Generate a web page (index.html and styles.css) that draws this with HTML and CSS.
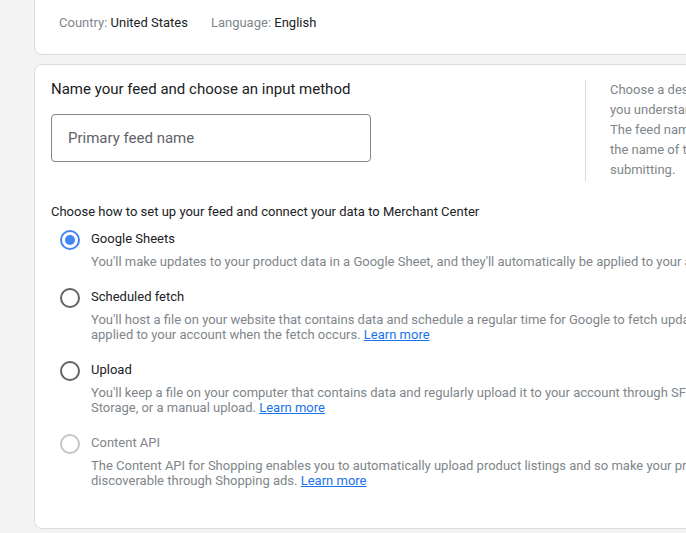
FILE: index.html
```html
<!DOCTYPE html>
<html lang="en">
<head>
<meta charset="utf-8">
<title>Feed setup</title>
<link rel="stylesheet" href="styles.css">
</head>
<body>
<main class="page">
  <section class="card card-summary">
    <div class="meta">
      <span class="meta-item"><span class="meta-key">Country:</span> United States</span>
      <span class="meta-item"><span class="meta-key">Language:</span> English</span>
    </div>
  </section>

  <section class="card card-feed">
    <div class="name-row">
      <div class="name-main">
        <h2 class="title">Name your feed and choose an input method</h2>
        <div class="input-box"><span class="placeholder">Primary feed name</span></div>
      </div>
      <aside class="help">Choose a descriptive name that helps<br>you understand the contents of this feed.<br>The feed name doesn't have to match<br>the name of the file you're<br>submitting.</aside>
    </div>

    <p class="prompt">Choose how to set up your feed and connect your data to Merchant Center</p>

    <ul class="options">
      <li class="option">
        <span class="radio radio-checked"></span>
        <div class="option-body">
          <div class="option-label">Google Sheets</div>
          <div class="option-desc">You'll make updates to your product data in a Google Sheet, and they'll automatically be applied to your account.</div>
        </div>
      </li>
      <li class="option">
        <span class="radio"></span>
        <div class="option-body">
          <div class="option-label">Scheduled fetch</div>
          <div class="option-desc">You'll host a file on your website that contains data and schedule a regular time for Google to fetch updates. Updates are only<br>applied to your account when the fetch occurs. <a href="#" class="link">Learn more</a></div>
        </div>
      </li>
      <li class="option">
        <span class="radio"></span>
        <div class="option-body">
          <div class="option-label">Upload</div>
          <div class="option-desc">You'll keep a file on your computer that contains data and regularly upload it to your account through SFTP, Google Cloud<br>Storage, or a manual upload. <a href="#" class="link">Learn more</a></div>
        </div>
      </li>
      <li class="option option-disabled">
        <span class="radio radio-disabled"></span>
        <div class="option-body">
          <div class="option-label">Content API</div>
          <div class="option-desc">The Content API for Shopping enables you to automatically upload product listings and so make your products easily<br>discoverable through Shopping ads. <a href="#" class="link">Learn more</a></div>
        </div>
      </li>
    </ul>
  </section>
</main>
</body>
</html>
```

FILE: styles.css
```css
* {
  box-sizing: border-box;
}

html, body {
  margin: 0;
  padding: 0;
  background: #f3f3f3;
  overflow: hidden;
}

body {
  font-family: Roboto, "Noto Sans", Arial, sans-serif;
  color: #202124;
  width: 686px;
  height: 533px;
}

.page {
  padding-left: 34px;
  display: flex;
  flex-direction: column;
  gap: 9px;
}

.card {
  background: #fff;
  border: 1px solid #dadce0;
  border-radius: 8px;
  width: 820px;
}

.card-summary {
  margin-top: -10px;
  padding: 24px 24px 23px;
}

.meta {
  display: flex;
  gap: 23px;
  font-size: 13px;
  line-height: 16px;
  color: #202124;
}

.meta-key {
  color: #80868b;
}

.card-feed {
  padding: 14px 16px 40px;
}

.name-row {
  display: flex;
}

.name-main {
  width: 534px;
  flex: none;
}

.title {
  margin: 0;
  font-size: 15px;
  font-weight: 400;
  line-height: 20px;
  color: #202124;
}

.input-box {
  margin-top: 15px;
  width: 320px;
  height: 48px;
  border: 1px solid #80868b;
  border-radius: 4px;
  display: flex;
  align-items: center;
  padding-left: 16px;
}

.placeholder {
  font-size: 15px;
  color: #5f6368;
}

.help {
  border-left: 1px solid #dadce0;
  margin-top: 1px;
  padding: 0 0 1px 24px;
  width: 280px;
  font-size: 13px;
  line-height: 20px;
  color: #80868b;
  white-space: nowrap;
}

.prompt {
  margin: 23px 0 0;
  font-size: 13px;
  line-height: 16px;
  color: #202124;
}

.options {
  list-style: none;
  margin: 11px 0 0;
  padding: 0;
  display: flex;
  flex-direction: column;
  gap: 20px;
}

.option {
  display: flex;
  align-items: flex-start;
}

.radio {
  flex: none;
  width: 20px;
  height: 20px;
  margin: -1px 11px 0 9px;
  border: 2px solid #5f6368;
  border-radius: 50%;
  display: flex;
  align-items: center;
  justify-content: center;
}

.radio-checked {
  border-color: #4285f4;
}

.radio-checked::after {
  content: "";
  width: 10px;
  height: 10px;
  border-radius: 50%;
  background: #4285f4;
}

.radio-disabled {
  border-color: #c4c7ca;
}

.option-body {
  display: flex;
  flex-direction: column;
  gap: 7px;
}

.option-label {
  font-size: 13px;
  line-height: 16px;
  color: #202124;
}

.option-disabled .option-label {
  color: #80868b;
}

.option-desc {
  font-size: 13px;
  line-height: 15px;
  color: #80868b;
  white-space: nowrap;
}

.link {
  color: #1a73e8;
  text-decoration: underline;
}
```
